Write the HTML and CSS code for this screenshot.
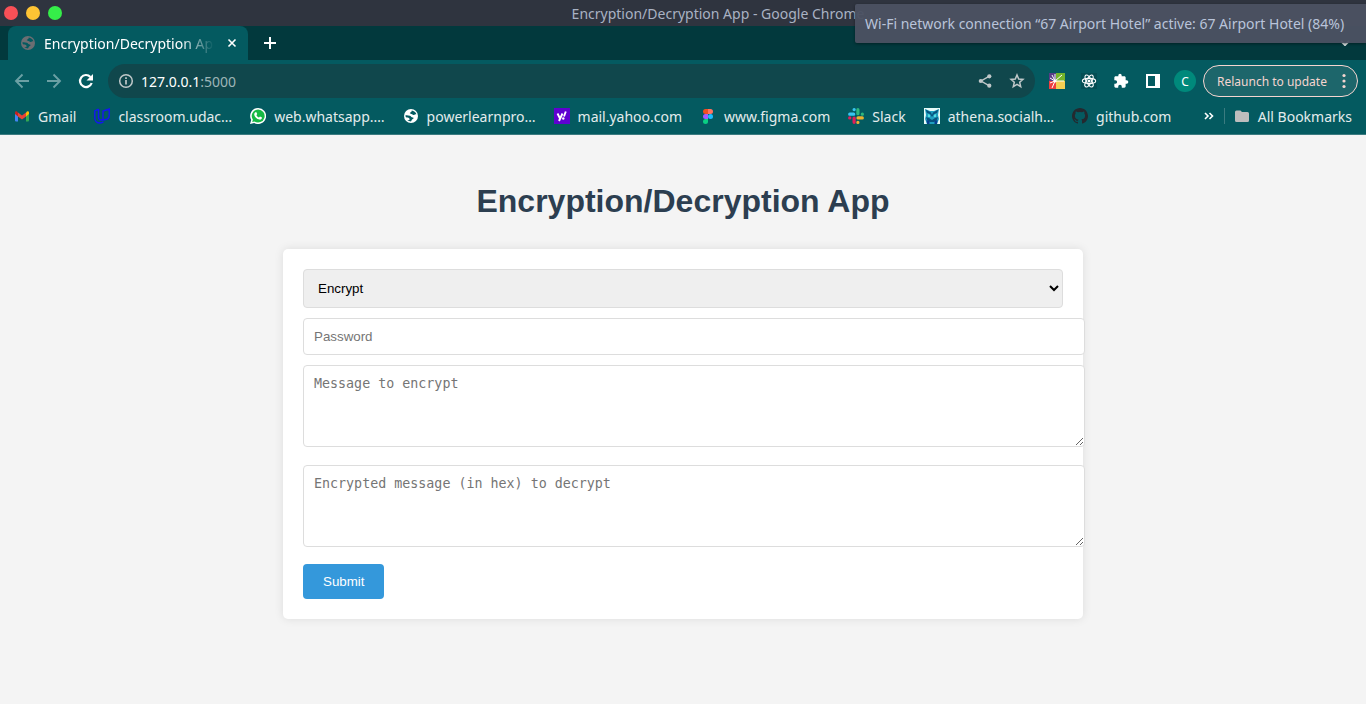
FILE: index.html
```html
<!DOCTYPE html>
<html lang="en">
<head>
<meta charset="utf-8">
<meta name="viewport" content="width=device-width, initial-scale=1">
<title>Encryption/Decryption App</title>
<link rel="stylesheet" href="styles.css">
</head>
<body>
<svg class="sprite" aria-hidden="true">
  <symbol id="globe" viewBox="0 0 16 16">
    <circle cx="8" cy="8" r="7" fill="currentColor"/>
    <path class="globe-land" d="M8.800 2.400c2 .2 4 1.700 4.600 3.800-1.200-.1-1.700.9-2.900.7-.9-.1-1.200-.8-2-1-.8-.1-1.500.1-1.600-.7-.1-.7.8-.8 1.300-1.200.4-.3.3-1 .6-1.600zM2.500 7.300c1.500-.2 3 0 4.400.4 1 .3 1.100 1.300 2 1.600.8.300 1.700.2 1.600 1-.1.700-1 .8-1.500 1.300-.5.500-.5 1.200-1 1.900-1.400 0-2.700-.5-3.700-1.400l1.800-.1c.8-.2.5-1.300.1-1.700-.8-.8-2.500-.5-3.300-1.300-.4-.4-.5-1.200-.4-1.700z"/>
  </symbol>
</svg>

<header class="browser">
  <div class="titlebar">
    <div class="lights">
      <button class="light red" aria-label="Close window"></button>
      <button class="light amber" aria-label="Minimise window"></button>
      <button class="light green" aria-label="Maximise window"></button>
    </div>
    <span class="window-title">Encryption/Decryption App - Google Chrome</span>
  </div>

  <div class="tabs">
    <div class="tab">
      <svg class="icon tab-globe"><use href="#globe"/></svg>
      <span class="tab-title">Encryption/Decryption App</span>
      <button class="plain" aria-label="Close tab"><svg width="10" height="10" viewBox="0 0 10 10"><path d="M1.500 1.500l7 7M8.500 1.500l-7 7" stroke="#fff" stroke-width="1.600"/></svg></button>
    </div>
    <button class="plain new-tab" aria-label="New tab"><svg width="14" height="14" viewBox="0 0 14 14"><path d="M7 1v12M1 7h12" stroke="#fff" stroke-width="2"/></svg></button>
    <button class="plain tab-search" aria-label="Search tabs"><svg width="10" height="6" viewBox="0 0 10 6"><path d="M1 1l4 4 4-4" fill="none" stroke="#dfe7e8" stroke-width="2"/></svg></button>
  </div>

  <div class="toolbar">
    <nav class="history" aria-label="History">
      <button class="plain" aria-label="Back"><svg class="icon" viewBox="0 0 16 16"><path d="M15 8H2M8.500 1.500L2 8l6.500 6.500" fill="none" stroke="#6ba0a4" stroke-width="1.900"/></svg></button>
      <button class="plain" aria-label="Forward"><svg class="icon" viewBox="0 0 16 16"><path d="M1 8h13M7.500 1.500L14 8l-6.500 6.500" fill="none" stroke="#6ba0a4" stroke-width="1.900"/></svg></button>
      <button class="plain" aria-label="Reload"><svg class="icon" viewBox="0 0 16 16"><path d="M13.700 10A6 6 0 1 1 12.400 3.900" fill="none" stroke="#fff" stroke-width="2.200"/><path d="M15 1v6.500H8.500z" fill="#fff"/></svg></button>
    </nav>
    <div class="omnibox">
      <svg class="icon" viewBox="0 0 16 16"><circle cx="8" cy="8" r="6.300" fill="none" stroke="#c0c8c9" stroke-width="1.500"/><path d="M8 7v4.500M8 4.300v1.700" stroke="#c0c8c9" stroke-width="1.700"/></svg>
      <a class="address" href="#"><span>127.0.0.1</span>:5000</a>
      <button class="plain" aria-label="Share"><svg class="icon" viewBox="0 0 16 16"><path d="M12 3.300L4 8l8 4.700" fill="none" stroke="#c0c8c9" stroke-width="1.400"/><g fill="#c0c8c9"><circle cx="12.300" cy="3.300" r="2.100"/><circle cx="3.800" cy="8" r="2.100"/><circle cx="12.300" cy="12.700" r="2.100"/></g></svg></button>
      <button class="plain" aria-label="Bookmark this page"><svg class="icon" viewBox="0 0 16 16"><path d="M8 2l1.700 4 4.300.4-3.300 2.900 1 4.300L8 11.300l-3.700 2.300 1-4.300L2 6.400 6.300 6z" fill="none" stroke="#c0c8c9" stroke-width="1.500"/></svg></button>
    </div>
    <div class="extensions">
      <button class="plain" aria-label="Colour extension"><svg class="icon" viewBox="0 0 16 16"><path fill="#583c87" d="M0 0h7v8H0z"/><path fill="#74b52b" d="M7 0h9v8H7z"/><path fill="#ef3f40" d="M0 8h7v8H0z"/><path fill="#f4cf53" d="M7 8h9v8H7z"/><path d="M6 8L13 2M6 8h9M6 8L3 15M6 8L1 10M6 8L1 5M6 8L3 2M6 8V1" stroke="#fff" stroke-width="1"/><circle cx="6" cy="8" r="1.500" fill="#fff"/></svg></button>
      <button class="plain" aria-label="React tools"><svg class="icon react" viewBox="0 0 16 16"><g fill="none" stroke="#fff" stroke-width="1.100"><ellipse cx="8" cy="8" rx="6.700" ry="2.600"/><ellipse cx="8" cy="8" rx="6.700" ry="2.600" transform="rotate(60 8 8)"/><ellipse cx="8" cy="8" rx="6.700" ry="2.600" transform="rotate(120 8 8)"/></g><circle cx="8" cy="8" r="1.500" fill="#fff"/></svg></button>
      <button class="plain" aria-label="Extensions"><svg class="icon" viewBox="0 0 24 24"><path fill="#fff" d="M20.500 11H19V7c0-1.100-.9-2-2-2h-4V3.500a2.500 2.500 0 0 0-5 0V5H4c-1.100 0-2 .9-2 2v3.800h1.500a2.700 2.700 0 0 1 0 5.400H2V20c0 1.100.9 2 2 2h3.800v-1.500a2.700 2.700 0 0 1 5.400 0V22H17c1.100 0 2-.9 2-2v-4h1.500a2.500 2.500 0 0 0 0-5z"/></svg></button>
      <button class="plain" aria-label="Side panel"><svg class="icon" viewBox="0 0 16 16"><path fill="#fff" fill-rule="evenodd" d="M1 1h14v14H1zM3 3v10h7V3z"/></svg></button>
      <button class="avatar">C</button>
      <button class="relaunch"><span>Relaunch to update</span><svg width="4" height="16" viewBox="0 0 4 16"><g fill="#f5d5d0"><circle cx="2" cy="2.500" r="1.600"/><circle cx="2" cy="8" r="1.600"/><circle cx="2" cy="13.500" r="1.600"/></g></svg></button>
    </div>
  </div>

  <nav class="bookmarks" aria-label="Bookmarks">
    <a href="#"><svg class="icon" viewBox="0 0 16 16"><path fill="#4285f4" d="M1 4l3 2v7.500H2a1 1 0 0 1-1-1z"/><path fill="#34a853" d="M15 4l-3 2v7.500h2a1 1 0 0 0 1-1z"/><path fill="#fbbc04" d="M12 4.500l1-1c1-.8 2 0 2 1V6l-3 2.500z"/><path fill="#c5221f" d="M1 6V4.500c0-1 1-1.800 2-1l1 1v4z"/><path fill="#ea4335" d="M4 4.500l4 3 4-3v4l-4 3-4-3z"/></svg>Gmail</a>
    <a href="#"><svg class="icon" viewBox="0 0 16 16"><path d="M4.500 1L.8 3v7c0 3 2.200 5 5.200 5 1.500 0 2.500-.5 3.500-1.300M4.500 1v8.500c0 1.800 1.500 2.800 4.500 2.500M9 3v9c4 0 6.200-1.500 6.200-4.500V1z" fill="none" stroke="#1414f5" stroke-width="1.400"/></svg>classroom.udac…</a>
    <a href="#"><svg class="icon" viewBox="0 0 16 16"><path fill="#fff" d="M8 0a8 8 0 1 1-3.800 15L0 16l1.200-4A8 8 0 0 1 8 0z"/><path fill="#16b944" d="M8.100 1.500a6.500 6.500 0 1 1-3.600 11.900l-2.300.6.700-2.300A6.500 6.500 0 0 1 8.100 1.500z"/><path fill="#fff" d="M5.200 4.200h1.200l.8 1.900-.8 1.100c.7 1.200 1.500 1.900 2.600 2.400l1-1.100 2 1c0 1.500-1.200 2.300-2.500 2.100C6.800 11 4.500 8.600 4.200 6.400c0-.9.400-1.700 1-2.200z"/></svg>web.whatsapp.…</a>
    <a href="#"><svg class="icon bright"><use href="#globe"/></svg>powerlearnpro…</a>
    <a href="#"><svg class="icon" viewBox="0 0 16 16"><path fill="#5f01d1" d="M0 0h16v16H0z"/><path d="M3.500 5.500l2.500 5M8.500 5.500L5 13M11.800 3.500l-1.800 5" stroke="#fff" stroke-width="1.900"/><circle cx="9.300" cy="10.500" r="1.200" fill="#fff"/></svg>mail.yahoo.com</a>
    <a href="#"><svg class="icon" viewBox="0 0 16 16"><path fill="#f24e1e" d="M8 1v5H5.500a2.500 2.500 0 0 1 0-5z"/><path fill="#ff7262" d="M8 1h2.500a2.500 2.500 0 0 1 0 5H8z"/><path fill="#a259ff" d="M8 6v5H5.500a2.500 2.500 0 0 1 0-5z"/><circle cx="10.500" cy="8.500" r="2.500" fill="#1abcfe"/><path fill="#0acf83" d="M8 11v2.500A2.500 2.500 0 1 1 5.500 11z"/></svg>www.figma.com</a>
    <a href="#"><svg class="icon" viewBox="0 0 16 16"><g stroke-width="3.200" stroke-linecap="round"><path stroke="#36c5f0" d="M1.700 6.200h4M6.100 1.600h.1"/><path stroke="#2eb67d" d="M9.900 1.700v4M14.300 6.200h.1"/><path stroke="#ecb22e" d="M10 9.900h4.300M9.900 14.300v.1"/><path stroke="#e01e5a" d="M6.100 10v4.300M1.700 9.900h.1"/></g></svg>Slack</a>
    <a href="#"><svg class="icon" viewBox="0 0 16 16"><path fill="#e7fbf8" d="M0 0h16v16H0z"/><path fill="#1f9fc0" d="M1 1l5 2h4l5-2-1 6 1 4-2 5H3l-2-5 1-4z"/><path fill="#06527d" d="M1.500 1.500L7 4.500 8 7l1-2.500 5.500-3L13 5l-3 1-2 3-2-3-3-1zM2 9l3 1 3 2 3-2 3-1-1 3-3 2H6l-3-2z"/><path fill="#54dce0" d="M4 6l2 1v2H4zM12 6l-2 1v2h2z"/><path fill="#073e8f" d="M2.500 12l3 1v3H3zM13.500 12l-3 1v3H13z"/></svg>athena.socialh…</a>
    <a href="#"><svg class="icon" viewBox="0 0 16 16"><path fill="#24292f" d="M8 0C3.600 0 0 3.600 0 8c0 3.500 2.300 6.500 5.500 7.600.4.100.5-.2.500-.4v-1.400c-2.200.5-2.700-.9-2.700-.9-.4-.9-.9-1.200-.9-1.200-.7-.5.100-.5.100-.5.800.1 1.200.8 1.200.8.700 1.200 1.900.9 2.300.7.100-.5.300-.9.500-1.100-1.800-.2-3.600-.9-3.600-4 0-.9.300-1.600.8-2.100-.1-.2-.4-1 .1-2.100 0 0 .7-.2 2.200.8a7.500 7.500 0 0 1 4 0c1.500-1 2.200-.8 2.200-.8.400 1.100.2 1.900.1 2.100.5.600.8 1.300.8 2.100 0 3.100-1.900 3.700-3.700 3.900.3.300.6.800.6 1.500v2.200c0 .2.100.5.600.4C13.700 14.500 16 11.500 16 8c0-4.400-3.600-8-8-8z"/></svg>github.com</a>
    <button class="plain more" aria-label="More bookmarks"><svg width="10" height="8" viewBox="0 0 10 8"><path d="M1 1l3 3-3 3M5.500 1l3 3-3 3" fill="none" stroke="#fff" stroke-width="1.600"/></svg></button>
    <span class="divider"></span>
    <a href="#"><svg class="icon" viewBox="0 0 16 16"><path fill="#bdbdbd" d="M1 4a1.500 1.500 0 0 1 1.500-1.500h4L8 4h5.500A1.500 1.500 0 0 1 15 5.500v7a1.500 1.500 0 0 1-1.500 1.500h-11A1.500 1.500 0 0 1 1 12.500z"/></svg>All Bookmarks</a>
  </nav>
</header>

<div class="notification" role="status">Wi-Fi network connection “67 Airport Hotel” active: 67 Airport Hotel (84%)</div>

<main class="page">
  <h1>Encryption/Decryption App</h1>
  <form class="card">
    <select aria-label="Operation"><option>Encrypt</option><option>Decrypt</option></select>
    <input type="password" aria-label="Password" placeholder="Password">
    <textarea rows="4" aria-label="Message to encrypt" placeholder="Message to encrypt"></textarea>
    <textarea rows="4" aria-label="Encrypted message" placeholder="Encrypted message (in hex) to decrypt"></textarea>
    <button class="submit" type="button">Submit</button>
  </form>
</main>
</body>
</html>
```

FILE: styles.css
```css
* { box-sizing: border-box; }

body {
  margin: 0;
  min-height: 100vh;
  background: #f4f4f4;
  font-family: "Liberation Sans", Arial, sans-serif;
}

.sprite { position: absolute; width: 0; height: 0; }
.icon { width: 16px; height: 16px; flex: none; display: block; }
.plain { display: flex; padding: 0; border: 0; background: none; }

.browser {
  font-family: "Noto Sans", sans-serif;
  font-size: 14px;
  color: #e3eced;
  background: #045a60;
  border-bottom: 1px solid #3b7b80;
}

.titlebar {
  display: grid;
  grid-template-columns: 1fr auto 1fr;
  align-items: center;
  height: 26px;
  padding: 0 4px;
  background: #2f343f;
}
.lights { display: flex; gap: 8px; }
.light { width: 14px; height: 14px; padding: 0; border: 0; border-radius: 50%; }
.red { background: #fa5057; }
.amber { background: #fec434; }
.green { background: #35ee49; }
.window-title { padding-left: 70px; color: #a9b2c3; }

.tabs {
  display: flex;
  align-items: center;
  height: 34px;
  padding: 0 16px 0 8px;
  background: #02393d;
}
.tab {
  display: flex;
  align-items: center;
  width: 240px;
  height: 34px;
  padding: 0 11px 0 12px;
  border-radius: 8px 8px 0 0;
  background: #045a60;
  color: #fff;
}
.tab-globe { color: #6c6e72; }
.bright { color: #fff; }
.tab-title {
  flex: 1;
  margin: 0 13px 0 8px;
  overflow: hidden;
  white-space: nowrap;
  -webkit-mask-image: linear-gradient(to right, #000 80%, transparent);
  mask-image: linear-gradient(to right, #000 80%, transparent);
}
.globe-land { fill: #045a60; }
.new-tab { margin-left: 15px; }
.tab-search { margin-left: auto; }

.toolbar {
  display: flex;
  align-items: center;
  gap: 14px;
  height: 42px;
  padding: 0 8px 0 14px;
}
.history { display: flex; gap: 16px; }
.omnibox {
  display: flex;
  flex: 1;
  align-items: center;
  gap: 16px;
  height: 34px;
  padding: 0 10px;
  border-radius: 17px;
  background: #10474c;
}
.address {
  flex: 1;
  margin-left: -9px;
  color: #9db5b7;
  text-decoration: none;
}
.address span { color: #fff; }
.extensions { display: flex; align-items: center; gap: 16px; }
.react { background: #044e54; }
.avatar {
  width: 22px;
  height: 22px;
  margin: 0 -9px 0 -3px;
  padding: 0;
  border: 0;
  border-radius: 50%;
  background: #00897b;
  color: #fff;
  font: 12px "Noto Sans", sans-serif;
}
.relaunch {
  display: flex;
  align-items: center;
  justify-content: space-between;
  width: 155px;
  height: 32px;
  padding: 0 11px 0 13px;
  border: 1px solid #f5d5d0;
  border-radius: 16px;
  background: #1d666b;
  color: #f5d5d0;
  font: 12px "Noto Sans", sans-serif;
  white-space: nowrap;
}

.bookmarks {
  display: flex;
  align-items: center;
  gap: 18px;
  height: 32px;
  padding: 0 14px 4px;
}
.bookmarks a {
  display: flex;
  align-items: center;
  gap: 8px;
  color: inherit;
  text-decoration: none;
  white-space: nowrap;
}
.more { margin-left: auto; }
.divider { width: 1px; height: 16px; margin: 0 -9px 0 -8px; background: #3b7b80; }

.notification {
  position: absolute;
  top: 4px;
  right: 0;
  min-width: 511px;
  padding: 0 8px 0 10px;
  border-radius: 2px 0 0 2px;
  background: rgba(75, 81, 98, 0.96);
  box-shadow: 0 1px 3px rgba(0, 0, 0, 0.4);
  color: #b9c4da;
  font: 14px/39px "Noto Sans", sans-serif;
  white-space: nowrap;
}

.page { max-width: 800px; margin: 0 auto; padding: 48px 0; }
h1 {
  margin: 0 0 30px;
  color: #2c3e50;
  font-size: 32px;
  line-height: 36px;
  text-align: center;
}
.card {
  display: flex;
  flex-direction: column;
  align-items: flex-start;
  padding: 20px;
  border-radius: 5px;
  background: #fff;
  box-shadow: 0 0 10px rgba(0, 0, 0, 0.1);
}
.card select, .card input, .card textarea {
  padding: 10px;
  border: 1px solid #ddd;
  border-radius: 4px;
}
.card select, .card input, .submit { font-family: "Liberation Sans", Arial, sans-serif; }
.card select {
  width: 100%;
  height: 39px;
  margin-bottom: 10px;
  background: #efefef;
  color: #000;
}
.card input, .card textarea { box-sizing: content-box; width: 100%; }
.card input {
  height: 15px;
  margin-bottom: 10px;
}
.card textarea {
  display: block;
  height: 60px;
  margin-bottom: 18px;
  font-family: "DejaVu Sans Mono", monospace;
  line-height: 15px;
}
.card textarea:last-of-type { margin-bottom: 17px; }
.submit {
  padding: 10px 20px;
  border: 0;
  border-radius: 4px;
  background: #3498db;
  color: #fff;
  line-height: 15px;
}
```
